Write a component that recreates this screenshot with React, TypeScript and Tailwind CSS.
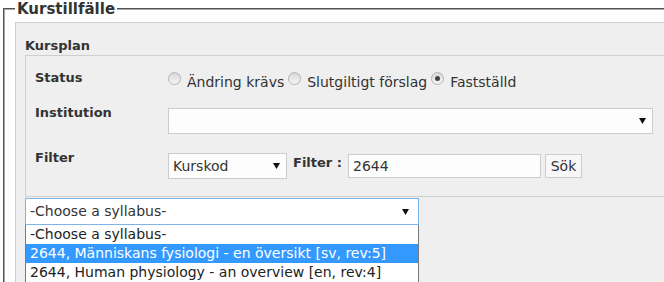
import React from "react";

const Arrow = () => (
  <svg width="7" height="6" viewBox="0 0 7 6" className="shrink-0">
    <polygon points="0,0 7,0 3.5,6" fill="#111" />
  </svg>
);

function Radio({ checked }: { checked?: boolean }) {
  return (
    <span className="mt-[2px] flex h-[13px] w-[13px] shrink-0 items-center justify-center rounded-full border border-[#b5b5b5] bg-gradient-to-b from-[#d8d8d8] to-[#f6f6f6]">
      {checked && <span className="h-[5px] w-[5px] rounded-full bg-[#444]" />}
    </span>
  );
}

function RadioItem({ label, checked }: { label: string; checked?: boolean }) {
  return (
    <label className="flex items-start">
      <Radio checked={checked} />
      <span className="ml-[6px] mr-[4px] mt-[4px] leading-[16px]">{label}</span>
    </label>
  );
}

const options = [
  "-Choose a syllabus-",
  "2644, Människans fysiologi - en översikt [sv, rev:5]",
  "2644, Human physiology - an overview [en, rev:4]",
];

export default function App() {
  return (
    <div className="h-[282px] w-[664px] overflow-hidden bg-white font-['DejaVu_Sans',Verdana,sans-serif] text-[13px] text-[#333]">
      <fieldset className="ml-[3px] min-h-[400px] w-[820px] border-2 border-[#a8a8a8] pl-[10px] pt-[4px] [border-style:groove]">
        <legend className="px-[2px] text-[15px] font-bold leading-[18px] text-[#333]">Kurstillfälle</legend>
        <div className="min-h-[320px] border-l border-t border-[#cfcfcf] bg-[#efefef] pl-[9px] pt-[15px]">
          <div className="font-bold leading-[16px]">Kursplan</div>

          <div className="mt-[1px] border border-[#cfcfcf] bg-[#efefef] pb-[17px] pl-[9px] pt-[14px]">
            <div className="flex items-start">
              <div className="w-[133px] shrink-0 font-bold leading-[16px]">Status</div>
              <div className="flex items-start text-[14px]">
                <RadioItem label="Ändring krävs" />
                <RadioItem label="Slutgiltigt förslag" />
                <RadioItem label="Fastställd" checked />
              </div>
            </div>

            <div className="mt-[15px] flex items-start">
              <div className="w-[133px] shrink-0 font-bold leading-[16px]">Institution</div>
              <div className="mt-[3px] flex h-[26px] w-[485px] items-center justify-end border border-[#cccccc] bg-[#fdfdfd] pr-[6px]">
                <Arrow />
              </div>
            </div>

            <div className="mt-[16px] flex items-start">
              <div className="w-[133px] shrink-0 font-bold leading-[16px]">Filter</div>
              <div className="mt-[3px] flex h-[26px] w-[119px] items-center justify-between border border-[#cccccc] bg-[#fdfdfd] pl-[4px] pr-[6px] text-[14px]">
                <span>Kurskod</span>
                <Arrow />
              </div>
              <span className="ml-[6px] mt-[5px] font-bold leading-[16px]">Filter :</span>
              <div className="ml-[6px] mt-[4px] flex h-[24px] w-[193px] items-center border border-[#cccccc] bg-[#fdfdfd] pl-[4px] text-[14px]">
                2644
              </div>
              <button className="ml-[4px] mt-[4px] h-[24px] w-[37px] border border-[#cccccc] bg-[#f7f7f7] text-[14px] text-[#333]">
                Sök
              </button>
            </div>
          </div>

          <div className="relative mt-[1px] w-[394px]">
            <div className="flex h-[27px] items-center justify-between border border-[#7eb4ea] bg-white pl-[4px] pr-[9px] text-[14px]">
              <span>-Choose a syllabus-</span>
              <Arrow />
            </div>
            <div className="absolute left-0 top-[27px] w-[394px] border-x border-b border-[#7a7a7a] bg-white text-[14px]">
              {options.map((o, i) => (
                <div
                  key={o}
                  className={`h-[19px] pl-[4px] leading-[19px] ${i === 1 ? "bg-[#3399ff] text-white" : "text-[#222]"}`}
                >
                  {o}
                </div>
              ))}
            </div>
          </div>
        </div>
      </fieldset>
    </div>
  );
}
